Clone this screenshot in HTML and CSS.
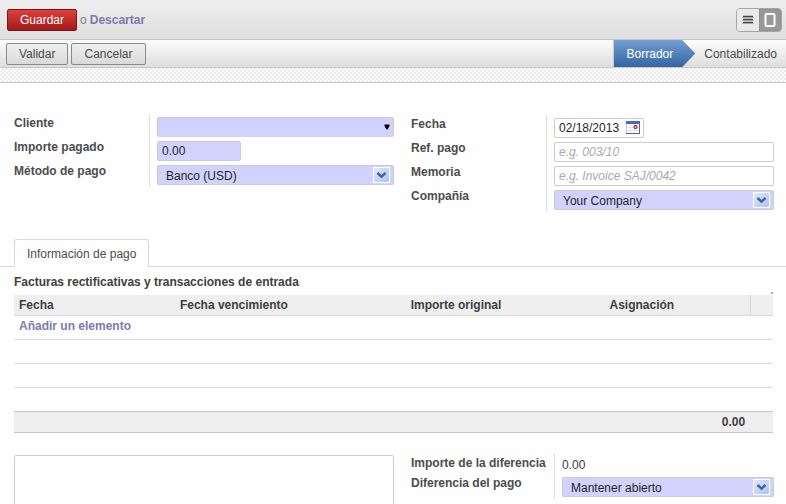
FILE: index.html
```html
<!DOCTYPE html>
<html lang="es">
<head>
<meta charset="utf-8">
<title>Pago de cliente</title>
<link rel="stylesheet" href="styles.css">
</head>
<body>
<div class="app">
  <header class="toolbar">
    <div class="actions">
      <button class="btn primary" type="button">Guardar</button>
      <span class="or">o</span>
      <a class="link" href="#">Descartar</a>
    </div>
    <div class="switcher">
      <button type="button" aria-label="Lista"><svg width="12" height="9" viewBox="0 0 12 9"><path d="M1 1.5h10M1 4.5h10M1 7.5h10" stroke="#444" stroke-width="1.4"/><path d="M0 2.5h12M0 5.5h12M0 8.5h12" stroke="#999" stroke-width=".6"/></svg></button>
      <button type="button" class="active" aria-label="Formulario"><svg width="12" height="14" viewBox="0 0 12 14"><rect x="1.5" y="1" width="9" height="12" rx="1" fill="none" stroke="#fff" stroke-width="2"/></svg></button>
    </div>
  </header>
  <div class="statusbar">
    <div class="actions">
      <button class="btn" type="button">Validar</button>
      <button class="btn" type="button">Cancelar</button>
    </div>
    <ol class="steps">
      <li class="current">Borrador</li>
      <li>Contabilizado</li>
    </ol>
  </div>
  <div class="pattern"></div>

  <main>
    <div class="columns top">
      <div class="group">
        <div class="row"><label for="cliente">Cliente</label>
          <div class="cell"><div class="combo"><input id="cliente" class="field required open" type="text"><button class="drop" type="button" aria-label="Mostrar clientes"><svg width="6" height="6" viewBox="0 0 6 6"><path d="M0.5 0.5h5v1.5L3.5 5.5h-1L0.5 2z" fill="#000"/></svg></button></div></div></div>
        <div class="row"><label for="importe">Importe pagado</label>
          <div class="cell"><input id="importe" class="field required short" type="text" value="0.00"></div></div>
        <div class="row"><label for="metodo">Método de pago</label>
          <div class="cell"><div class="combo"><select id="metodo" class="field required"><option>Banco (USD)</option></select><svg class="arrow" width="17" height="16" viewBox="0 0 17 16"><use href="#chevron"/></svg></div></div></div>
      </div>
      <div class="group lower">
        <div class="row"><label for="fecha">Fecha</label>
          <div class="cell"><div class="combo date"><input id="fecha" class="field" type="text" value="02/18/2013"><button class="calendar" type="button" aria-label="Elegir fecha"><svg width="14" height="13" viewBox="0 0 14 13"><rect width="14" height="13" fill="#b9c6dd"/><rect width="14" height="3" fill="#3f6fc4"/><rect x="1" y="3" width="12" height="9" fill="#fff"/><path d="M1 6.5h12M1 9.5h12M4.5 3v9M8.5 3v9" stroke="#e3e7ef" stroke-width="1"/><path d="M13.5 1v12M0 12.5h14" stroke="#4a689f" stroke-width="1"/><circle cx="9.5" cy="6" r="1.5" fill="#fff" stroke="#b3262c" stroke-width="1.3"/></svg></button></div></div></div>
        <div class="row"><label for="ref">Ref. pago</label>
          <div class="cell"><input id="ref" class="field" type="text" placeholder="e.g. 003/10"></div></div>
        <div class="row"><label for="memoria">Memoria</label>
          <div class="cell"><input id="memoria" class="field" type="text" placeholder="e.g. Invoice SAJ/0042"></div></div>
        <div class="row"><label for="compania">Compañía</label>
          <div class="cell"><div class="combo"><select id="compania" class="field required"><option>Your Company</option></select><svg class="arrow" width="17" height="16" viewBox="0 0 17 16"><use href="#chevron"/></svg></div></div></div>
      </div>
    </div>

    <nav class="tabs"><a class="tab" href="#" aria-current="page">Información de pago</a></nav>

    <section class="lines">
      <div class="caption"><h2>Facturas rectificativas y transacciones de entrada</h2><span class="dot"></span></div>
      <table>
        <colgroup><col class="c1"><col class="c2"><col class="c3"><col class="c4"><col class="c5"></colgroup>
        <thead><tr><th>Fecha</th><th>Fecha vencimiento</th><th>Importe original</th><th>Asignación</th><th class="last"></th></tr></thead>
        <tbody>
          <tr><td colspan="5"><a class="link" href="#">Añadir un elemento</a></td></tr>
          <tr><td colspan="5"></td></tr>
          <tr><td colspan="5"></td></tr>
          <tr><td colspan="5"></td></tr>
        </tbody>
        <tfoot><tr><td colspan="4">0.00</td><td></td></tr></tfoot>
      </table>
    </section>

    <div class="columns bottom">
      <textarea class="field notes" aria-label="Notas internas"></textarea>
      <div class="group wide">
        <div class="row compact"><span class="label">Importe de la diferencia</span><div class="cell"><span class="value">0.00</span></div></div>
        <div class="row"><label for="diferencia">Diferencia del pago</label>
          <div class="cell"><div class="combo"><select id="diferencia" class="field required"><option>Mantener abierto</option></select><svg class="arrow" width="17" height="16" viewBox="0 0 17 16"><use href="#chevron"/></svg></div></div></div>
      </div>
    </div>
  </main>
</div>
<svg class="defs" width="0" height="0"><defs>
  <linearGradient id="glass" x2="1" y2="1"><stop stop-color="#dce8fd"/><stop offset="1" stop-color="#a9c6f5"/></linearGradient>
  <g id="chevron"><rect width="17" height="16" fill="#fff"/><rect x="1" y="1" width="15" height="14" rx="1" fill="url(#glass)"/><path d="M4.5 6 8.5 9.6 12.5 6" fill="none" stroke="#46608f" stroke-width="2.4"/></g>
</defs></svg>
</body>
</html>
```
FILE: styles.css
```css
* { box-sizing: border-box; }

body {
  margin: 0;
  font: 12px/16px "Liberation Sans", Arial, sans-serif;
  color: #4c4c4c;
  background: #fefefe;
}

button, input, select, textarea { font: inherit; color: inherit; }

.app {
  display: flex;
  flex-direction: column;
  height: 100vh;
  overflow: hidden;
}

.toolbar, .statusbar {
  display: flex;
  justify-content: space-between;
  flex: none;
}

.toolbar {
  height: 40px;
  align-items: center;
  padding: 0 4px 0 7px;
  background: linear-gradient(#eee, #dedede);
  border-bottom: 1px solid #c4c4c8;
}

.statusbar {
  height: 28px;
  padding-left: 6px;
  background: linear-gradient(#fcfcfc, #dedede);
  border-bottom: 1px solid #c8c8c8;
}

.actions { display: flex; align-items: center; gap: 3px; }

.btn {
  height: 22px;
  padding: 0 12px;
  border: 1px solid #8a8a8a;
  border-radius: 2px;
  background: linear-gradient(#efefef, #d9d9d9);
}

.primary {
  color: #fff;
  border-color: #7a1518;
  background: linear-gradient(#df3f3f, #a21a1a);
}

.or { color: #808080; }

.link {
  color: #7c7bad;
  font-weight: bold;
  text-decoration: none;
}

.switcher {
  display: flex;
  height: 24px;
  border: 1px solid #a6a6a6;
  border-radius: 4px;
  overflow: hidden;
}

.switcher button {
  display: flex;
  align-items: center;
  justify-content: center;
  width: 22px;
  padding: 0;
  border: 0;
  background: #e9e9e9;
}

.switcher .active { background: #999; box-shadow: inset 0 0 2px #777; }

.steps {
  display: flex;
  margin: 0;
  padding: 0;
  list-style: none;
  line-height: 28px;
  border-left: 1px solid #c8c8c8;
}

.steps li { padding: 0 9px; }

.steps .current {
  padding: 0 22px 0 13px;
  color: #fff;
  background: linear-gradient(#729fcf, #3465a4);
  clip-path: polygon(0 0, calc(100% - 13px) 0, 100% 50%, calc(100% - 13px) 100%, 0 100%);
}

.pattern {
  flex: none;
  height: 15px;
  border-bottom: 1px solid #c8c8d3;
  background: repeating-conic-gradient(#ececec 0 25%, #fbfbfb 0 50%) 0 0 / 4px 4px;
}

main {
  flex: 1;
  display: flex;
  flex-direction: column;
  min-height: 0;
}

.columns {
  display: grid;
  grid-template-columns: 380fr 363fr;
  gap: 17px;
  padding: 0 12px 0 14px;
}

.top { padding-top: 31px; align-items: start; }

.lower { margin-top: 1px; }

.row {
  display: grid;
  grid-template-columns: 135px 1fr;
  height: 24px;
}

.wide .row { grid-template-columns: 143px 1fr; }

.wide .compact { height: 20px; }

.row label, .label { padding-top: 1px; font-weight: bold; white-space: nowrap; }

.cell {
  padding: 3px 0 0 7px;
  border-left: 1px solid #ddd;
}

.field {
  display: block;
  width: 100%;
  height: 20px;
  margin: 0;
  padding: 0 4px;
  border: 1px solid #ccc;
  border-radius: 2px;
  background: #fff;
  color: #1f1f1f;
}

.required { background: #d2d2ff; }

.open { border-bottom-color: #d2d2ff; }

.short { width: 84px; }

select.field { appearance: none; padding: 2px 24px 0 8px; }

.field::placeholder { color: #a9a9a9; font-style: italic; opacity: 1; }

.combo { position: relative; }

.date { width: 90px; }

.arrow { position: absolute; top: 2px; right: 4px; pointer-events: none; }

.drop, .calendar {
  position: absolute;
  top: 0;
  right: 4px;
  display: flex;
  align-items: center;
  height: 19px;
  padding: 0;
  border: 0;
  background: none;
}

.tabs {
  display: flex;
  margin-top: 28px;
  padding-left: 14px;
  border-bottom: 1px solid #d8d8d8;
}

.tab {
  padding: 6px 12px 4px;
  margin-bottom: -1px;
  border: 1px solid #d8d8d8;
  border-bottom-color: #fefefe;
  border-radius: 3px 3px 0 0;
  background: #fefefe;
  color: inherit;
  text-decoration: none;
}

.lines { padding: 7px 13px 0 14px; }

.caption {
  display: flex;
  justify-content: space-between;
  align-items: flex-end;
  height: 21px;
}

h2 {
  margin: 0 0 5px;
  font-size: 12px;
  line-height: 16px;
  color: #404040;
}

.dot { width: 2px; height: 2px; margin-bottom: 1px; background: #aaa; }

table {
  width: 100%;
  table-layout: fixed;
  border-collapse: separate;
  border-spacing: 0;
  color: #404040;
}

.c1 { width: 21.2%; }
.c2 { width: 30.4%; }
.c3 { width: 26.2%; }
.c4 { width: 19.2%; }
.c5 { width: 3%; }

th, td {
  height: 24px;
  padding: 0 5px 4px;
  text-align: left;
  border-bottom: 1px solid #d8d8d8;
}

th { height: 21px; padding-bottom: 0; background: #eee; }

.last { border-left: 1px solid #d8d8d8; }

tbody tr:last-child td { border-bottom-color: #c8c8c8; }

tfoot td {
  height: 21px;
  padding-bottom: 0;
  text-align: right;
  font-weight: bold;
  background: #eee;
  border-bottom-color: #c8c8c8;
}

.bottom { flex: 1; min-height: 50px; padding-top: 21px; align-items: start; }

.notes { height: 120px; resize: none; margin-top: 1px; }

.value { color: #404040; }
```
